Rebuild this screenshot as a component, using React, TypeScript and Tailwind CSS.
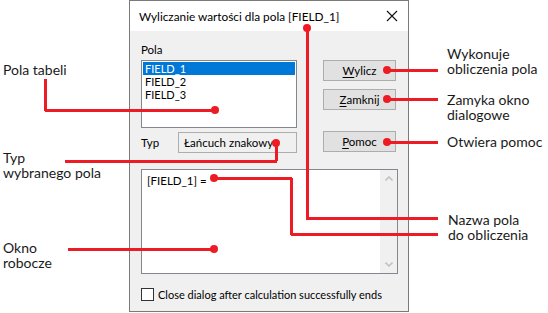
const red = "bg-[#ed1c24]";

function HLine({ x1, x2, y }: { x1: number; x2: number; y: number }) {
  return (
    <div
      className={`absolute h-[3px] ${red}`}
      style={{ left: x1, top: y - 1, width: x2 - x1 }}
    />
  );
}

function VLine({ x, y1, y2 }: { x: number; y1: number; y2: number }) {
  return (
    <div
      className={`absolute w-[3px] ${red}`}
      style={{ left: x - 1, top: y1, height: y2 - y1 + 2 }}
    />
  );
}

function Dot({ x, y }: { x: number; y: number }) {
  return (
    <div
      className={`absolute h-[8px] w-[8px] rounded-full ${red}`}
      style={{ left: x - 4, top: y - 4 }}
    />
  );
}

function Label({ x, y, lines }: { x: number; y: number; lines: string[] }) {
  return (
    <div
      className="absolute text-[14px] leading-[15px] text-[#1a1a1a] font-['Lato',sans-serif] whitespace-nowrap"
      style={{ left: x, top: y }}
    >
      {lines.map((l) => (
        <div key={l}>{l}</div>
      ))}
    </div>
  );
}

function Button({ accel, rest }: { accel: string; rest: string }) {
  return (
    <div className="flex h-[21px] w-[73px] items-center justify-center border border-[#adadad] bg-[#e1e1e1] text-black">
      <span>
        <span className="underline underline-offset-2">{accel}</span>
        {rest}
      </span>
    </div>
  );
}

function Dialog() {
  return (
    <div className="ml-[129px] flex h-[312px] w-[280px] flex-col border border-[#7a7a7a] bg-white font-['Lato',sans-serif] text-[11.5px] leading-[15px] text-black">
      <div className="flex h-[30px] items-center justify-between pl-[9px] pr-[9px]">
        <span className="text-[11.8px]">Wyliczanie wartości dla pola [FIELD_1]</span>
        <svg width="12" height="12" viewBox="0 0 12 12" className="mr-[1px]">
          <path d="M1 1 L11 11 M11 1 L1 11" stroke="#111" strokeWidth="1.1" />
        </svg>
      </div>
      <div className="flex flex-1 flex-col bg-[#f0f0f0] pl-[11px] pt-[11px]">
        <div className="flex">
          <div className="flex w-[156px] flex-col">
            <div className="h-[16px] leading-[16px]">Pola</div>
            <div className="mt-[2px] flex h-[68px] flex-col border border-[#828790] bg-white p-[1px] text-[11px] leading-[13px]">
              <div className="h-[13px] bg-[#0078d7] pl-[2px] text-white">FIELD_1</div>
              <div className="h-[13px] pl-[2px]">FIELD_2</div>
              <div className="h-[13px] pl-[2px]">FIELD_3</div>
            </div>
            <div className="mt-[4px] flex h-[21px] items-center">
              <span className="w-[37px]">Typ</span>
              <div className="flex h-[21px] w-[119px] items-center border border-[#adadad] bg-[#f0f0f0] pl-[5px]">
                Łańcuch znakowy
              </div>
            </div>
          </div>
          <div className="ml-[26px] mt-[18px] flex flex-col">
            <Button accel="W" rest="ylicz" />
            <div className="mt-[8px]">
              <Button accel="Z" rest="amknij" />
            </div>
            <div className="mt-[21px]">
              <Button accel="P" rest="omoc" />
            </div>
          </div>
        </div>
        <div className="mt-[16px] flex h-[105px] w-[257px] border border-[#828790] bg-white">
          <div className="flex-1 pl-[5px] pt-[3px]">[FIELD_1] =</div>
          <div className="flex w-[17px] flex-col items-center justify-between bg-[#f0f0f0] py-[6px]">
            <svg width="8" height="5" viewBox="0 0 8 5">
              <path d="M0.5 4.5 L4 1 L7.5 4.5" stroke="#c2c2c2" strokeWidth="1.6" fill="none" />
            </svg>
            <svg width="8" height="5" viewBox="0 0 8 5">
              <path d="M0.5 0.5 L4 4 L7.5 0.5" stroke="#c2c2c2" strokeWidth="1.6" fill="none" />
            </svg>
          </div>
        </div>
        <div className="mt-[13px] flex items-center">
          <div className="h-[13px] w-[13px] border border-[#333] bg-white" />
          <span className="ml-[4px] whitespace-nowrap text-[11px]">Close dialog after calculation successfully ends</span>
        </div>
      </div>
    </div>
  );
}

export default function App() {
  return (
    <div className="relative h-[313px] w-[548px] overflow-hidden bg-white">
      <Dialog />

      {/* title -> Nazwa pola */}
      <VLine x={307} y1={28} y2={218} />
      <HLine x1={307} x2={438} y={218} />
      <Dot x={307} y={28} />

      {/* [FIELD_1] = -> Nazwa pola */}
      <HLine x1={214} x2={292} y={178} />
      <VLine x={291} y1={178} y2={233} />
      <HLine x1={291} x2={438} y={234} />
      <Dot x={214} y={178} />

      {/* Pola tabeli */}
      <VLine x={45} y1={79} y2={109} />
      <HLine x1={45} x2={215} y={110} />
      <Dot x={215} y={110} />

      {/* Typ */}
      <HLine x1={65} x2={277} y={161} />
      <VLine x={276} y1={143} y2={159} />
      <Dot x={276} y={143} />

      {/* Okno robocze */}
      <HLine x1={68} x2={214} y={249} />
      <Dot x={214} y={249} />

      {/* right side */}
      <HLine x1={387} x2={438} y={70} />
      <Dot x={387} y={70} />
      <HLine x1={387} x2={438} y={99} />
      <Dot x={387} y={99} />
      <HLine x1={387} x2={438} y={142} />
      <Dot x={387} y={142} />

      <Label x={3} y={62} lines={["Pola tabeli"]} />
      <Label x={3} y={150} lines={["Typ", "wybranego pola"]} />
      <Label x={3} y={240} lines={["Okno", "robocze"]} />
      <Label x={447} y={46} lines={["Wykonuje", "obliczenia pola"]} />
      <Label x={447} y={92} lines={["Zamyka okno", "dialogowe"]} />
      <Label x={447} y={134} lines={["Otwiera pomoc"]} />
      <Label x={448} y={212} lines={["Nazwa pola", "do obliczenia"]} />
    </div>
  );
}
